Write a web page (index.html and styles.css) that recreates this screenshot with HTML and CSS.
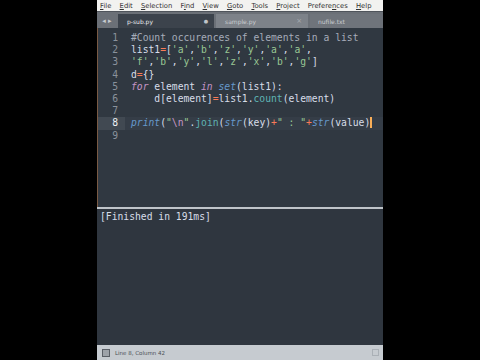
FILE: index.html
```html
<!DOCTYPE html>
<html>
<head>
<meta charset="utf-8">
<link rel="stylesheet" href="styles.css">
</head>
<body>
<div class="screen">
  <div class="menubar">
    <span><u>F</u>ile</span><span><u>E</u>dit</span><span><u>S</u>election</span><span>F<u>i</u>nd</span><span><u>V</u>iew</span><span><u>G</u>oto</span><span><u>T</u>ools</span><span><u>P</u>roject</span><span>Prefere<u>n</u>ces</span><span><u>H</u>elp</span>
  </div>
  <div class="tabbar">
    <div class="arrows">◂ ▸</div>
    <div class="tab active"><span class="tname">p-sub.py</span><span class="dot">●</span></div>
    <div class="tab"><span class="tname">sample.py</span><span class="x">×</span></div>
    <div class="tab last"><span class="tname">nufile.txt</span></div>
  </div>
  <div class="editor">
    <div class="gutter">
      <div>1</div><div>2</div><div>3</div><div>4</div><div>5</div><div>6</div><div>7</div><div class="cur">8</div><div>9</div>
    </div>
    <div class="code">
      <div class="ln"><span class="c">#Count occurences of elements in a list</span></div>
      <div class="ln">list1<span class="o">=</span>[<span class="s">'a'</span>,<span class="s">'b'</span>,<span class="s">'z'</span>,<span class="s">'y'</span>,<span class="s">'a'</span>,<span class="s">'a'</span>,</div>
      <div class="ln"><span class="s">'f'</span>,<span class="s">'b'</span>,<span class="s">'y'</span>,<span class="s">'l'</span>,<span class="s">'z'</span>,<span class="s">'x'</span>,<span class="s">'b'</span>,<span class="s">'g'</span>]</div>
      <div class="ln">d<span class="o">=</span>{}</div>
      <div class="ln"><span class="k">for</span> element <span class="k">in</span> <span class="b">set</span>(list1):</div>
      <div class="ln">    d[element]<span class="o">=</span>list1.<span class="f">count</span>(element)</div>
      <div class="ln"> </div>
      <div class="ln cur"><span class="b">print</span>(<span class="s">"</span><span class="e">\n</span><span class="s">"</span>.<span class="f">join</span>(<span class="b">str</span>(key)<span class="o">+</span><span class="s">" : "</span><span class="o">+</span><span class="b">str</span>(value<span class="br">)</span></div>
      <div class="ln"> </div>
    </div>
  </div>
  <div class="divider"></div>
  <div class="output">[Finished in 191ms]</div>
  <div class="status">
    <span class="sicon"></span>
    <span class="stext">Line 8, Column 42</span>
    <span class="spacer"></span>
    <span class="ricon"></span>
  </div>
</div>
</body>
</html>
```
FILE: styles.css
```css
html, body {
  margin: 0;
  padding: 0;
  background: #000;
  width: 480px;
  height: 360px;
  overflow: hidden;
}
body {
  display: flex;
  justify-content: center;
}
.screen {
  width: 286px;
  height: 360px;
  display: flex;
  flex-direction: column;
  background: #303841;
}
.menubar {
  height: 11px;
  flex: none;
  background: #f2f2f0;
  display: flex;
  align-items: center;
  gap: 8.2px;
  padding-left: 3px;
  font-family: "DejaVu Sans", sans-serif;
  font-size: 6.8px;
  color: #333;
  white-space: nowrap;
}
.menubar u { text-decoration-thickness: 0.5px; text-underline-offset: 1px; }
.tabbar {
  height: 17px;
  flex: none;
  background: #6b7077;
  display: flex;
  align-items: flex-end;
  border-top: 1px solid #4f545b;
  box-sizing: border-box;
  font-family: "DejaVu Sans", sans-serif;
  font-size: 6px;
  color: #e6e8ea;
}
.arrows {
  width: 20px;
  height: 14px;
  display: flex;
  align-items: center;
  justify-content: center;
  color: #c8ccd0;
  font-size: 7px;
  margin-right: 1px;
}
.tab {
  width: 92px;
  height: 14px;
  display: flex;
  align-items: center;
  padding: 0 6px 0 9px;
  box-sizing: border-box;
  background: #7d8289;
  color: #c9ccd0;
  margin-right: 2px;
}
.tab.active {
  width: 96px;
  background: #3c434c;
  color: #e9ebee;
}
.tab.last { width: 70px; background: #6f747b; padding-left: 8px; }
.tname { flex: 1; }
.dot { font-size: 5px; color: #c0c4c9; }
.x { font-size: 7px; color: #a7abb0; }
.editor {
  height: 179px;
  flex: none;
  display: flex;
  padding-top: 4px;
  box-sizing: border-box;
  border-left: 1px solid #7a5a44;
  font-family: "DejaVu Sans Mono", monospace;
  font-size: 9.7px;
  line-height: 12.2px;
  color: #d8dee9;
}
.gutter {
  width: 20px;
  padding-right: 7px;
  text-align: right;
  color: #8a929c;
  flex: none;
}
.gutter div { height: 12.2px; }
.gutter .cur { color: #eef1f5; background: #414952; margin-right: -7px; padding-right: 7px; }
.code { flex: 1; padding-left: 6px; }
.ln { white-space: pre; height: 12.2px; }
.ln.cur { background: #353d47; margin-left: -6px; padding-left: 6px; }
.c { color: #a6acb9; }
.o { color: #f97b58; }
.s { color: #99c794; }
.e { color: #c695c6; }
.k { color: #c695c6; font-style: italic; }
.b { color: #6699cc; font-style: italic; }
.f { color: #5fb4b4; }
.br { color: #d8dee9; border-right: 2px solid #f9ae58; }
.divider {
  height: 2px;
  flex: none;
  background: #bfc4c9;
}
.output {
  height: 136px;
  flex: none;
  box-sizing: border-box;
  padding: 2px 0 0 3px;
  background: #2f363f;
  font-family: "DejaVu Sans Mono", monospace;
  font-size: 9.7px;
  line-height: 12px;
  color: #d8dee9;
}
.status {
  height: 15px;
  flex: none;
  background: #c6cbd0;
  display: flex;
  align-items: center;
  padding: 0 4px 0 5px;
  font-family: "DejaVu Sans", sans-serif;
  font-size: 5.5px;
  color: #4a4f55;
  gap: 5px;
}
.sicon {
  width: 6px;
  height: 6px;
  border: 1px solid #5a5f66;
  background: #9ea3a9;
}
.spacer { flex: 1; }
.ricon {
  width: 5px;
  height: 5px;
  border: 1px solid #aab0b6;
}
```
